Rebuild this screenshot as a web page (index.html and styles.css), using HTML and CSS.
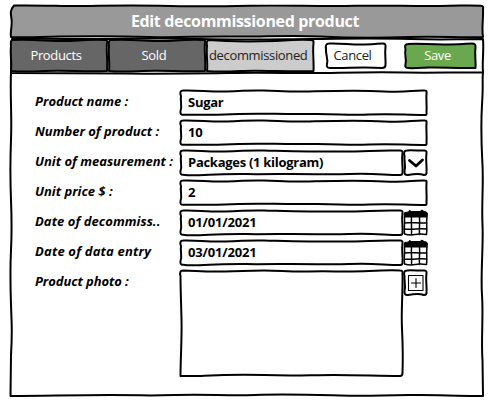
FILE: index.html
```html
<!DOCTYPE html>
<html lang="en">
<head>
<meta charset="utf-8">
<title>Edit decommissioned product</title>
<link rel="stylesheet" href="styles.css">
</head>
<body>
<svg class="defs" width="0" height="0" aria-hidden="true">
  <symbol id="field" viewBox="0 0 250 28" overflow="visible">
    <path d="M4 1.500 C20 1 30 3 48 2.500 S68 1 85 1.500 S110 3 130 2.500 S180 1 205 2.500 S232 1 246 1.500 Q248 1.500 247.500 4 C247 11 248 17 247.500 23 Q248 26.500 246 26 C225 26 215 24.500 190 25.500 S160 24.500 130 25 S85 24 60 25 S30 26 4 25.800 Q1 26 1.500 22 C3.500 17 1 13 2 7 Q0 1.500 4 1.500Z"/>
  </symbol>
  <symbol id="short" viewBox="0 0 226 28" overflow="visible">
    <path d="M4 1.500 C20 1 26 3 46 2.500 S68 1 85 1.500 S110 2.500 130 2.500 S170 3 190 2 S212 1.500 221 1.500 Q224 1.500 223.500 4 C222.500 11 224 17 223.500 23 Q224 26 221 26 C205 26 195 24 170 25 S135 24.500 100 25 S55 24.500 30 25.800 S12 26 4 25.800 Q1 26 1.500 22 C3.500 17 1 13 2 7 Q0 1.500 4 1.500Z"/>
  </symbol>
  <symbol id="square" viewBox="0 0 26 28" overflow="visible">
    <path d="M4 1.500 C11 1 16 2 21 1.500 Q24 1.500 23.500 4 C22.500 11 24 17 23.500 23 Q24 26 21 26 C16 24 10 25 5 26 Q1 26.500 1.500 22 C3 17 1 13 1.500 7 Q0 1.500 4 1.500Z"/>
  </symbol>
  <symbol id="calendar" viewBox="0 0 26 28" overflow="visible">
    <path class="solid" d="M2 3.500 L5.500 3 L6.500 1.500 L8.500 2.500 L17 2.500 L19 1 L21 2.500 Q24.500 2.500 24.500 5 L24 8 L1.500 8 Q.5 4 2 3.500Z"/>
    <path class="thin" d="M1.500 8 C2 14 .8 20 1.500 25 Q7 26.500 12 25.500 T23.500 25.500 C24.500 20 23 14 24 8 M8.500 8 C8 15 9 20 8.500 25.500 M16.500 8 C17 15 16 20 16.500 25.500 M1.500 14 Q8 13.300 13 13.800 T24 14 M1.500 20 Q8 20.500 13 20 T24 20"/>
  </symbol>
</svg>

<main class="window">
  <svg class="frame" width="474" height="392" viewBox="0 0 474 392">
    <path d="M1 67 C0 90 2 110 1 135 S0 170 1 195 S2 225 1 245 S0 270 1 300 S2.500 325 1 350 L.5 391 C35 391 60 390 100 390 S130 391 165 390 S215 391 245 390 S290 389.500 330 390.500 S370 389.500 410 390 S450 391 473 391 L472.500 355 C471 335 473.500 310 472 290 S473.500 240 472.500 220 S473.500 180 472.500 160 S470.500 125 472 100 S472 78 473 67"/>
  </svg>

  <header class="title">
    <svg class="frame" width="474" height="34" viewBox="0 0 474 34">
      <path class="grey" d="M4 .5 C35 0 55 1.500 80 1 S120 0 150 .8 S205 1.500 240 .8 S310 1.500 345 .8 S400 1.500 430 1 S460 0 471 .8 Q474 1 473 4 C473.500 14 471.500 22 473 32 C450 33 430 31 400 32 S340 33 310 31.500 S250 32 220 31.500 S170 33 140 32 S75 31 50 31.500 S20 33 1 32 C0 27 2.500 20 1.500 14 S0 5 4 .5Z"/>
    </svg>
    <h1>Edit decommissioned product</h1>
  </header>

  <nav class="bar">
    <svg class="frame" width="474" height="36" viewBox="0 0 474 36">
      <path d="M2 1 C40 0 65 1.500 100 1 S150 0 190 1 S250 1.500 300 1 S360 0 400 1 S440 1 473 1 C474 14 472 23 473 34.500 C445 34 430 35 395 34.500 S345 34.500 315 35 S265 34.500 225 35 S150 36 115 35.500 S45 35.500 1 35 C2 22 0 14 2 1Z"/>
    </svg>
    <button class="tab">
      <svg class="frame" width="98" height="34" viewBox="0 0 98 34"><path class="dark" d="M3 1 C25 0 40 2.500 60 2 S80 0 95 1 Q98 1 97 4 C96 13 98 22 97 32 C75 33 55 31 35 32 S10 33 1 32 C2 24 0 15 1 7 Q0 1 3 1Z"/></svg>
      <span class="products">Products</span>
    </button>
    <button class="tab">
      <svg class="frame" width="98" height="34" viewBox="0 0 98 34"><path class="dark" d="M3 1 C25 0 40 2.500 60 2 S80 0 95 1 Q98 1 97 4 C96 13 98 22 97 32 C75 33 55 31 35 32 S10 33 1 32 C2 24 0 15 1 7 Q0 1 3 1Z"/></svg>
      <span class="sold">Sold</span>
    </button>
    <button class="tab active">
      <svg class="frame" width="110" height="34" viewBox="0 0 110 34"><path class="light" d="M3 1 C25 3 50 2.500 70 2 S90 0 105 1 Q108 1 107.500 4 C106.500 13 108 22 107.500 32 C85 33 55 31 35 32 S10 33 1 32 C2 24 0 15 1 7 Q0 1 3 1Z"/></svg>
      <span class="decommissioned">decommissioned</span>
    </button>
    <div class="actions">
      <button class="action cancel">
        <svg class="frame" width="62" height="27" viewBox="0 0 62 27"><path class="white" d="M4 .5 C18 0 25 2 40 1.500 S50 .5 58 .5 Q61 .5 60.500 4 C59.500 12 61 17 60.500 22 Q60.500 25 57 25 C40 23.500 25 25 5 25 Q1 25 2 21 C3.500 16 .5 12 1 6 Q0 .5 4 .5Z"/></svg>
        <span>Cancel</span>
      </button>
      <button class="action save">
        <svg class="frame" width="73" height="27" viewBox="0 0 73 27"><path class="green" d="M4 1 C18 0 25 2 45 1.500 S60 .5 68 .5 Q72 .5 71.500 4 C70.500 12 72 17 71.500 25 C50 25.500 40 24 25 24.500 S10 25.500 4 25 Q.5 25 1.500 21 C3 16 0 12 1.500 6 Q0 1 4 1Z"/></svg>
        <span>Save</span>
      </button>
    </div>
  </nav>

  <form class="form">
    <div class="row"><label class="l1">Product name :</label><div class="field"><svg class="frame" width="250" height="28"><use href="#field"/></svg><span class="v1">Sugar</span></div></div>
    <div class="row"><label class="l2">Number of product :</label><div class="field"><svg class="frame" width="250" height="28"><use href="#field"/></svg><span class="v2">10</span></div></div>
    <div class="row"><label class="l3">Unit of measurement :</label><div class="field short"><svg class="frame" width="226" height="28"><use href="#short"/></svg><span class="v3">Packages (1 kilogram)</span></div>
      <svg class="icon" width="26" height="28"><use href="#square"/><path class="chevron" d="M6.500 11.500 L13 17 L19.500 11"/></svg></div>
    <div class="row"><label class="l4">Unit price $ :</label><div class="field"><svg class="frame" width="250" height="28"><use href="#field"/></svg><span class="v4">2</span></div></div>
    <div class="row"><label class="l5">Date of decommiss..</label><div class="field short"><svg class="frame" width="226" height="28"><use href="#short"/></svg><span class="v5">01/01/2021</span></div>
      <svg class="icon" width="26" height="28"><use href="#calendar"/></svg></div>
    <div class="row"><label class="l6">Date of data entry</label><div class="field short"><svg class="frame" width="226" height="28"><use href="#short"/></svg><span class="v6">03/01/2021</span></div>
      <svg class="icon" width="26" height="28"><use href="#calendar"/></svg></div>
    <div class="row photo-row"><label class="l7">Product photo :</label>
      <div class="photo"><svg class="frame" width="226" height="109" viewBox="0 0 226 109"><path d="M4 1.500 C20 2 26 3 46 2.500 S68 1.500 85 1.500 S110 3 130 2.500 S170 3 190 2 S212 1 221 1.500 Q224 1.500 223.500 4 C224 25 222 40 223 60 S224 90 223.500 104 Q223.500 107 221 107 C200 107 180 106 155 106 S115 107 85 106 S40 106 20 107 L1.500 107 C1.500 90 3 70 2.500 50 S1.500 20 1.500 7 Q0 1.500 4 1.500Z"/></svg></div>
      <svg class="icon" width="26" height="28"><use href="#square"/><path class="hair" d="M5.500 6.500 H20 V21.500 H5.500Z M8.500 14 H17.500 M13 9.500 V18.500"/></svg></div>
  </form>
</main>
</body>
</html>
```

FILE: styles.css
```css
* { box-sizing: border-box; }
body {
  margin: 0;
  padding: 5px 0 0 10px;
  background: #fff;
  color: #000;
  font-family: "Open Sans", "Noto Sans", sans-serif;
}
.defs { position: absolute; }
.window { position: relative; width: 474px; height: 392px; }
svg { display: block; fill: none; stroke: #000; stroke-width: 2; stroke-linejoin: round; stroke-linecap: round; }
.frame { position: absolute; left: 0; top: 0; overflow: visible; pointer-events: none; }
.grey { fill: #999; }
.dark { fill: #666; }
.light { fill: #ccc; }
.white { fill: #fff; }
.green { fill: #6aa84f; }
.solid { fill: #000; stroke-width: 1; }
.thin { stroke-width: 1.500; }
.hair { stroke-width: 1.1; }
.chevron { stroke-width: 2.8; }

.title { position: relative; height: 33px; display: flex; justify-content: center; align-items: center; }
h1 { position: relative; margin: 0; left: -2px; font-size: 16px; line-height: 33px; font-weight: 700; color: #fff; white-space: nowrap; letter-spacing: -.33px; }

.bar { position: relative; height: 35px; display: flex; padding: 1px 0 0 0; }
button { border: 0; padding: 0; background: none; font: inherit; color: inherit; }
.tab { position: relative; width: 98px; height: 34px; color: #fff; font-size: 13px; line-height: 32px; letter-spacing: -.35px; white-space: nowrap; }
.tab.active { width: 110px; color: #222; text-align: left; padding-left: 3px; }
.tab span, .action span { position: relative; }
.tab span { left: -3px; top: -1px; }
.tab.active span { left: 0; }
.actions { display: flex; gap: 18px; padding: 4px 0 0 9px; }
.action { position: relative; height: 27px; font-size: 13px; line-height: 25px; letter-spacing: -.35px; }
.cancel { width: 61px; color: #222; }
.save { width: 73px; color: #fff; }
.cancel span, .save span { left: -3px; top: -1px; }

.form { padding: 16px 0 0 25px; }
.row { display: flex; height: 30px; }
.row label { width: 144px; height: 28px; line-height: 25px; font-size: 13px; font-weight: 700; font-style: italic; white-space: nowrap; }
.row .l5 { letter-spacing: .06px; }
.row .l6 { letter-spacing: .18px; }
.row .l7 { letter-spacing: -.07px; }
.field { position: relative; width: 250px; height: 28px; padding-left: 9px; line-height: 27px; font-size: 13px; font-weight: 700; white-space: nowrap; letter-spacing: -.28px; }
.v5, .v6 { letter-spacing: -.18px; }
.field.short { width: 224px; }
.icon { overflow: visible; }
.photo-row { height: 109px; }
.photo { position: relative; width: 224px; height: 109px; }
```
